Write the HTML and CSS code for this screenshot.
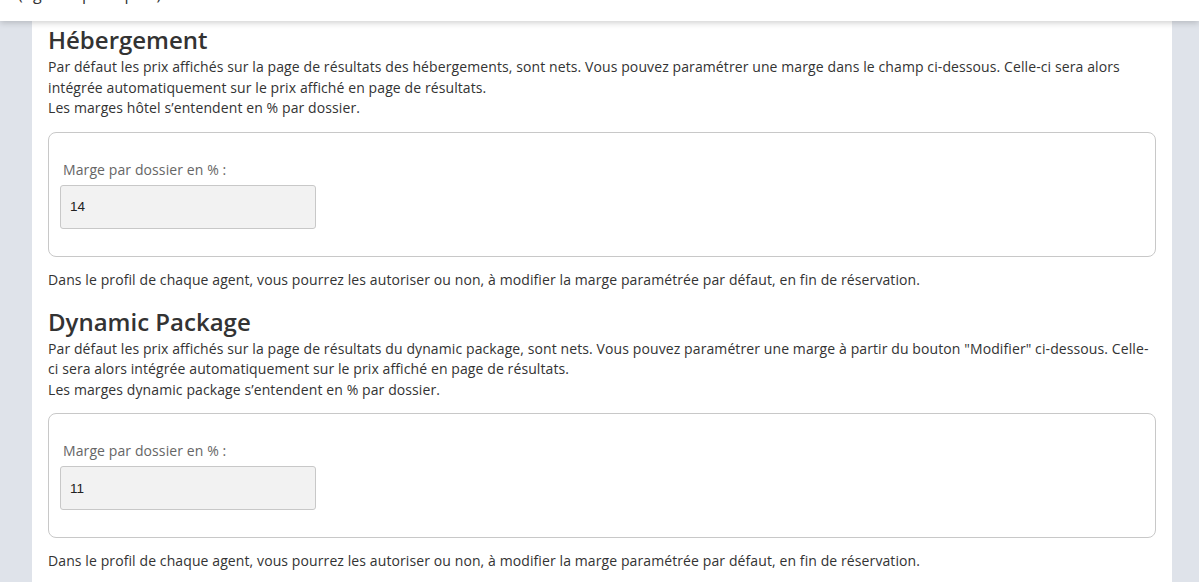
FILE: index.html
```html
<!DOCTYPE html>
<html lang="fr">
<head>
    <meta charset="UTF-8">
    <meta name="viewport" content="width=device-width, initial-scale=1.0">
    <title>Marges</title>
    <link rel="stylesheet" href="styles.css">
</head>
<body>
    <header class="topbar">
        <div class="topbar-text">(Agence principale)</div>
    </header>

    <main class="page">
        <div class="card">
            <!-- Hébergement -->
            <section class="margin-section">
                <h2>Hébergement</h2>
                <p class="intro">Par défaut les prix affichés sur la page de résultats des hébergements, sont nets. Vous pouvez paramétrer une marge dans le champ ci-dessous. Celle-ci sera alors intégrée automatiquement sur le prix affiché en page de résultats.<br>Les marges hôtel s’entendent en % par dossier.</p>
                <div class="margin-box">
                    <label for="marge-hotel">Marge par dossier en % :</label>
                    <input id="marge-hotel" class="margin-input" type="text" value="14" readonly>
                </div>
                <p class="note">Dans le profil de chaque agent, vous pourrez les autoriser ou non, à modifier la marge paramétrée par défaut, en fin de réservation.</p>
            </section>

            <!-- Dynamic Package -->
            <section class="margin-section">
                <h2>Dynamic Package</h2>
                <p class="intro">Par défaut les prix affichés sur la page de résultats du dynamic package, sont nets. Vous pouvez paramétrer une marge à partir du bouton "Modifier" ci-dessous. Celle-ci sera alors intégrée automatiquement sur le prix affiché en page de résultats.<br>Les marges dynamic package s’entendent en % par dossier.</p>
                <div class="margin-box">
                    <label for="marge-dp">Marge par dossier en % :</label>
                    <input id="marge-dp" class="margin-input" type="text" value="11" readonly>
                </div>
                <p class="note">Dans le profil de chaque agent, vous pourrez les autoriser ou non, à modifier la marge paramétrée par défaut, en fin de réservation.</p>
            </section>
        </div>
    </main>
</body>
</html>
```

FILE: styles.css
```css
body {
    margin: 0;
    font-family: "Open Sans", Lato, sans-serif;
    font-size: 14px;
    letter-spacing: 0.1px;
    color: #333;
    background-color: #dfe3ea;
    overflow: hidden;
}
.topbar {
    position: relative;
    z-index: 2;
    height: 21px;
    overflow: hidden;
    background-color: white;
    box-shadow: 0 2px 6px rgba(0,0,0,0.18);
    padding-left: 18px;
}
.topbar-text {
    margin-top: -15px;
    font-size: 16px;
    line-height: 18px;
    color: #333;
}
.page {
    padding: 0 27px 0 32px;
}
.card {
    background-color: white;
    padding: 4px 16px 20px;
    min-height: 600px;
}
.margin-section {
    margin-bottom: 17px;
}
h2 {
    margin: 0;
    font-size: 24px;
    line-height: 30px;
    font-weight: 600;
    letter-spacing: 0;
    color: #333;
}
.intro {
    margin: 2px 0 13px;
    line-height: 20.5px;
}
.margin-box {
    border: 1px solid #c8c8c8;
    border-radius: 8px;
    padding: 27px 11px 27px;
}
.margin-box label {
    display: block;
    margin: 0 0 5px 3px;
    line-height: 20px;
    color: #666;
}
.margin-input {
    display: block;
    box-sizing: border-box;
    width: 256px;
    height: 44px;
    padding: 0 9px;
    border: 1px solid #c8c8c8;
    border-radius: 3px;
    background-color: #f2f2f2;
    font-family: "Liberation Sans", Arial, sans-serif;
    font-size: 13.5px;
    letter-spacing: 0;
    color: #222;
}
.note {
    margin: 13px 0 0;
    line-height: 20px;
}
```
